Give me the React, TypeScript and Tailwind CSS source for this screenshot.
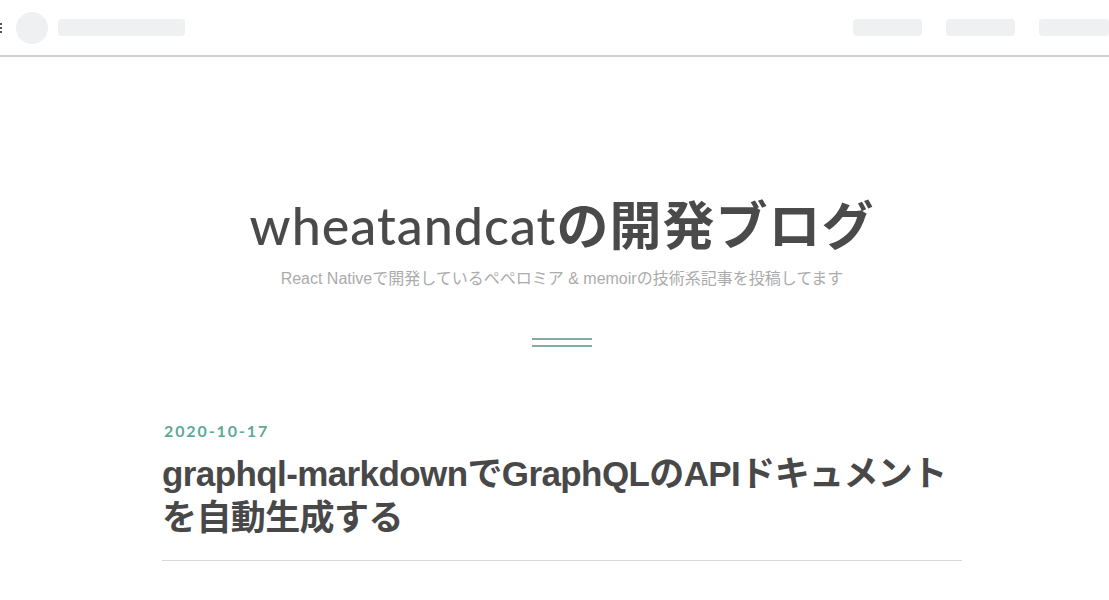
import React from "react";

export default function App() {
  return (
    <div className="w-[1109px] h-[600px] bg-white overflow-hidden relative" style={{ fontFamily: "Lato, 'Noto Sans CJK JP', sans-serif" }}>
      {/* header */}
      <header className="h-[57px] border-b-2 border-[#cfcfcf] flex items-center pl-[16px] relative">
        <div className="absolute left-0 top-[23px] flex flex-col gap-[2px]">
          <span className="block w-[2px] h-[2px] bg-[#555]" />
          <span className="block w-[2px] h-[2px] bg-[#555]" />
          <span className="block w-[2px] h-[2px] bg-[#555]" />
        </div>
        <div className="w-[32px] h-[32px] rounded-full bg-[#eef0f1]" />
        <div className="ml-[10px] w-[127px] h-[17px] rounded-[4px] bg-[#eef0f1]" />
        <div className="ml-auto flex gap-[24px]">
          <div className="w-[69px] h-[17px] rounded-[4px] bg-[#eef0f1]" />
          <div className="w-[69px] h-[17px] rounded-[4px] bg-[#eef0f1]" />
          <div className="w-[70px] h-[17px] rounded-[4px] bg-[#eef0f1]" />
        </div>
      </header>

      <main className="pl-[15px]">
        {/* hero */}
        <section className="flex flex-col items-center pt-[135px]">
          <h1 className="text-[52px] leading-[62px] text-[#4a4a4a] tracking-[1px] whitespace-nowrap">
            <span className="font-medium" style={{ fontFamily: "Lato, sans-serif" }}>wheatandcat</span>
            <span className="font-bold" style={{ fontFamily: "'Noto Sans CJK JP', sans-serif" }}>の開発ブログ</span>
          </h1>
          <p className="mt-[13px] text-[16px] leading-[20px] text-[#ababab] whitespace-nowrap" style={{ fontFamily: "'Liberation Sans', 'Noto Sans CJK JP', sans-serif" }}>
            React Nativeで開発しているペペロミア &amp; memoirの技術系記事を投稿してます
          </p>
          <div className="mt-[49px] w-[60px] flex flex-col gap-[5px]">
            <div className="h-[2px] bg-[#85aba3]" />
            <div className="h-[2px] bg-[#85aba3]" />
          </div>
        </section>

        {/* post */}
        <article className="w-[800px] mx-auto mt-[74px] pb-[20px] border-b border-[#d9d9d9]">
          <div className="text-[16px] leading-[20px] font-bold text-[#5fa896] tracking-[1.9px] pl-[2px]" style={{ fontFamily: "Lato, sans-serif" }}>
            2020-10-17
          </div>
          <h2 className="mt-[11px] text-[35px] leading-[44px] font-bold text-[#484848] tracking-[-0.6px]" style={{ fontFamily: "'Liberation Sans', 'Noto Sans CJK JP', sans-serif" }}>
            graphql-markdownでGraphQLのAPIドキュメントを自動生成する
          </h2>
        </article>
      </main>
    </div>
  );
}
